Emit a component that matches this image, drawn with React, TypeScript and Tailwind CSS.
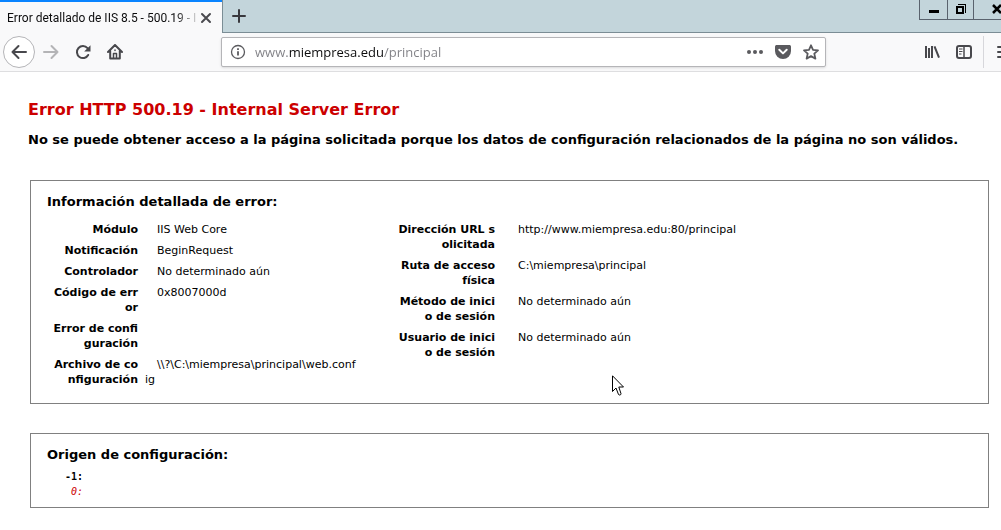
import type { ReactNode } from "react";

type Row = { label: ReactNode; value: ReactNode };

const requestRows: Row[] = [
  { label: "Módulo", value: "IIS Web Core" },
  { label: "Notificación", value: "BeginRequest" },
  { label: "Controlador", value: "No determinado aún" },
  { label: <>Código de err<br />or</>, value: "0x8007000d" },
  { label: <>Error de confi<br />guración</>, value: "" },
  {
    label: <>Archivo de co<br />nfiguración</>,
    value: <>{"\\\\?\\C:\\miempresa\\principal\\web.conf"}<br />ig</>,
  },
];

const locationRows: Row[] = [
  { label: <>Dirección URL s<br />olicitada</>, value: "http://www.miempresa.edu:80/principal" },
  { label: <>Ruta de acceso<br />física</>, value: "C:\\miempresa\\principal" },
  { label: <>Método de inici<br />o de sesión</>, value: "No determinado aún" },
  { label: <>Usuario de inici<br />o de sesión</>, value: "No determinado aún" },
];

function TitleBar() {
  return (
    <header className="flex h-[33px] bg-[#c3d5db]">
      <div className="flex w-[222px] shrink-0 items-center border-t-2 border-[#0a84ff] bg-[#f9f9fa] pl-[7px]">
        <span className="w-[190px] whitespace-nowrap font-[Roboto,sans-serif] text-[12px] leading-[18px] text-[#0c0c0d] [mask-image:linear-gradient(to_right,#000_168px,transparent_194px)]">
          Error detallado de IIS 8.5 - 500.19 - In
        </span>
        <button aria-label="Cerrar pestaña" className="ml-[3px] flex size-3 items-center justify-center text-[#4a4a4f]">
          <svg className="size-3" viewBox="0 0 12 12" fill="none" stroke="currentColor" strokeWidth="2" strokeLinecap="round">
            <path d="M2 2l8 8M10 2l-8 8" />
          </svg>
        </button>
      </div>
      <div className="flex min-w-0 flex-1 items-start border-b border-l border-[#7b8d95]">
        <button aria-label="Nueva pestaña" className="flex h-8 w-8 items-center justify-center text-[#38383d]">
          <svg className="size-4" viewBox="0 0 16 16" fill="none" stroke="currentColor" strokeWidth="2" strokeLinecap="round">
            <path d="M8 2v12M2 8h12" />
          </svg>
        </button>
        <div className="ml-auto flex h-5 border-b border-l border-[#59626d] text-black">
          <button aria-label="Minimizar" className="flex w-7 items-center justify-center border-r border-[#59626d]">
            <svg className="h-5 w-[10px]" viewBox="0 0 10 20" fill="currentColor" shapeRendering="crispEdges">
              <path d="M0 10h10v3H0z" />
            </svg>
          </button>
          <button aria-label="Restaurar" className="flex w-[26px] items-center justify-center border-r border-[#59626d]">
            <svg className="h-5 w-[10px]" viewBox="0 0 10 20" fill="none" stroke="currentColor" shapeRendering="crispEdges">
              <path d="M1 7h6v6H1z" strokeWidth="2" />
              <path d="M2 4.500h7.500v8" strokeWidth="1" />
            </svg>
          </button>
          <button aria-label="Cerrar" className="flex w-[27px] items-center justify-end">
            <svg className="h-5 w-[9px]" viewBox="0 0 9 20" fill="none" stroke="currentColor" strokeWidth="2.500">
              <path d="M1 5l8 8M9 5l-8 8" />
            </svg>
          </button>
        </div>
      </div>
    </header>
  );
}

function AddressBar() {
  return (
    <div className="mr-[98px] flex h-[30px] min-w-0 flex-1 items-center rounded-[2px] border border-[#b5b5b8] bg-white pr-[6px] pl-2 text-[#5a5a5e] shadow-sm">
      <button aria-label="Información del sitio">
        <svg className="size-4" viewBox="0 0 16 16" fill="none" stroke="currentColor">
          <circle cx="8" cy="8" r="6.500" strokeWidth="1.300" />
          <path d="M8 7.200v4.300M8 4.200v1.800" strokeWidth="1.800" />
        </svg>
      </button>
      <input
        type="text"
        aria-label="Dirección"
        defaultValue="www.miempresa.edu/principal"
        className="ml-[9px] h-6 min-w-0 flex-1 bg-[linear-gradient(to_right,#808085_33px,#0c0c0d_33px,#0c0c0d_128px,#808085_128px)] bg-clip-text text-[13px] text-transparent caret-black outline-none"
      />
      <div className="flex gap-3">
        <button aria-label="Acciones de página">
          <svg className="size-4" viewBox="0 0 16 16" fill="currentColor">
            <circle cx="2" cy="8" r="2" />
            <circle cx="8" cy="8" r="2" />
            <circle cx="14" cy="8" r="2" />
          </svg>
        </button>
        <button aria-label="Guardar en Pocket">
          <svg className="size-4" viewBox="0 0 16 16">
            <path d="M1.800 1h12.400C15.300 1 16 1.700 16 2.700V7a8 8 0 0 1-16 0V2.700C0 1.700.7 1 1.800 1z" fill="currentColor" />
            <path d="M4.300 5.800L8 9.400l3.700-3.600" fill="none" stroke="#fff" strokeWidth="2" strokeLinecap="round" strokeLinejoin="round" />
          </svg>
        </button>
        <button aria-label="Añadir a marcadores">
          <svg className="size-4" viewBox="0 0 16 16" fill="none" stroke="currentColor" strokeWidth="1.800" strokeLinejoin="round">
            <path d="M8 1.300l2 4.500 5 .5-3.700 3.300 1.100 5L8 12.100l-4.400 2.500 1.100-5L1 6.300l5-.5z" />
          </svg>
        </button>
      </div>
    </div>
  );
}

function Toolbar() {
  return (
    <nav className="flex h-[39px] items-center border-b border-[#dedee0] bg-[#f9f9fa] pl-[3px] text-[#48484c]">
      <div className="flex w-[218px] shrink-0 items-center">
        <button aria-label="Atrás" className="flex size-8 items-center justify-center rounded-full border border-[#b5b5b8] bg-white">
          <svg className="size-4" viewBox="0 0 16 16" fill="none" stroke="currentColor" strokeWidth="2" strokeLinecap="round" strokeLinejoin="round">
            <path d="M15 8H1.500M7.500 2l-6 6 6 6" />
          </svg>
        </button>
        <button aria-label="Adelante" className="flex size-8 items-center justify-center text-[#b4b4b6]">
          <svg className="size-4" viewBox="0 0 16 16" fill="none" stroke="currentColor" strokeWidth="2" strokeLinecap="round" strokeLinejoin="round">
            <path d="M1 8h13.500M8.500 2l6 6-6 6" />
          </svg>
        </button>
        <button aria-label="Recargar" className="flex size-8 items-center justify-center">
          <svg className="size-4" viewBox="0 0 16 16">
            <path d="M12.500 4.200A6 6 0 1 0 13.200 11" fill="none" stroke="currentColor" strokeWidth="2" strokeLinecap="round" />
            <path d="M15.500 1.200v6.300H9.200z" fill="currentColor" />
          </svg>
        </button>
        <button aria-label="Inicio" className="flex size-8 items-center justify-center">
          <svg className="size-4" viewBox="0 0 16 16" fill="none" stroke="currentColor" strokeWidth="2" strokeLinecap="round" strokeLinejoin="round">
            <path d="M1 8l7-7 7 7M3.200 7v7.500h9.600V7" />
            <path d="M6.500 14V9.500h3V14" strokeWidth="1.500" />
            <path d="M8 6v.5" strokeWidth="1.500" />
          </svg>
        </button>
      </div>
      <AddressBar />
      <div className="flex w-[77px] shrink-0 items-center">
        <button aria-label="Biblioteca">
          <svg className="size-4" viewBox="0 0 16 16" fill="none" stroke="currentColor" strokeWidth="2">
            <path d="M2 2v12M5 4v10M8 2v12M10.500 2.300l4.500 11.400" />
          </svg>
        </button>
        <button aria-label="Barra lateral" className="ml-4">
          <svg className="size-4" viewBox="0 0 16 16" fill="none" stroke="currentColor">
            <rect x="1" y="2" width="14" height="12" rx="2" strokeWidth="2" />
            <path d="M8 2v12" strokeWidth="1.500" />
            <path d="M3 5h3.500M3 7.500h3.500M3 10h2.500" strokeWidth="1" />
          </svg>
        </button>
        <span className="ml-[11px] h-8 w-px shrink-0 bg-[#d7d7db]" />
        <button aria-label="Abrir menú" className="ml-[13px] w-1 shrink-0 overflow-hidden">
          <svg className="h-4 w-4" viewBox="0 0 16 16" fill="none" stroke="currentColor" strokeWidth="2" strokeLinecap="round">
            <path d="M1 3h14M1 8h14M1 13h14" />
          </svg>
        </button>
      </div>
    </nav>
  );
}

function DetailTable({ rows, wide = false }: { rows: Row[]; wide?: boolean }) {
  return (
    <table className="border-collapse self-start text-[11px] leading-[15px]">
      <tbody>
        {rows.map((row, i) => (
          <tr key={i} className="align-top">
            <th
              scope="row"
              className={
                wide
                  ? "w-[114px] py-[3px] pr-[11px] text-right font-bold whitespace-nowrap"
                  : "w-[98px] py-[3px] pr-[7px] text-right font-bold whitespace-nowrap"
              }
            >
              {row.label}
            </th>
            <td className="py-[3px] indent-3 whitespace-nowrap">{row.value}</td>
          </tr>
        ))}
      </tbody>
    </table>
  );
}

export default function App() {
  return (
    <div className="relative min-h-screen overflow-x-clip bg-white font-['Open_Sans','Noto_Sans',sans-serif]">
      <TitleBar />
      <Toolbar />
      <main className="pt-[26px] pr-3 pb-5 pl-[30px] font-['DejaVu_Sans',Verdana,sans-serif] text-black">
        <div className="-ml-[2px] whitespace-nowrap">
          <h1 className="text-[16px] leading-6 font-bold text-[#cc0000]">Error HTTP 500.19 - Internal Server Error</h1>
          <h2 className="mt-2 text-[13px] leading-5 font-bold">
            No se puede obtener acceso a la página solicitada porque los datos de configuración relacionados de la página no son válidos.
          </h2>
        </div>
        <section className="mt-[30px] border border-[#808080] px-4 pt-[11px] pb-[13px]">
          <h3 className="text-[13px] leading-5 font-bold">Información detallada de error:</h3>
          <div className="mt-[7px] grid grid-cols-[345px_1fr]">
            <DetailTable rows={requestRows} />
            <DetailTable rows={locationRows} wide />
          </div>
        </section>
        <section className="mt-[29px] border border-[#808080] px-4 pt-[11px] pb-2">
          <h3 className="text-[13px] leading-5 font-bold">Origen de configuración:</h3>
          <pre className="mt-1 font-['DejaVu_Sans_Mono',monospace] text-[10px] leading-[15px]">
            <code className="block font-['DejaVu_Sans_Mono',monospace] font-bold">{"   -1:"}</code>
            <code className="block font-['DejaVu_Sans_Mono',monospace] text-[#cc0000] italic">{"    0:"}</code>
          </pre>
        </section>
      </main>
      <svg className="pointer-events-none absolute top-[375px] left-[612px] h-[21px] w-3" viewBox="0 0 12 21" fill="#fff" stroke="#000" aria-hidden="true">
        <path d="M.5.8v15.700l3.500-3.500 2.500 6.500c.5 1 2.800.5 2.500-.8L6.800 12h4.700z" />
      </svg>
    </div>
  );
}
